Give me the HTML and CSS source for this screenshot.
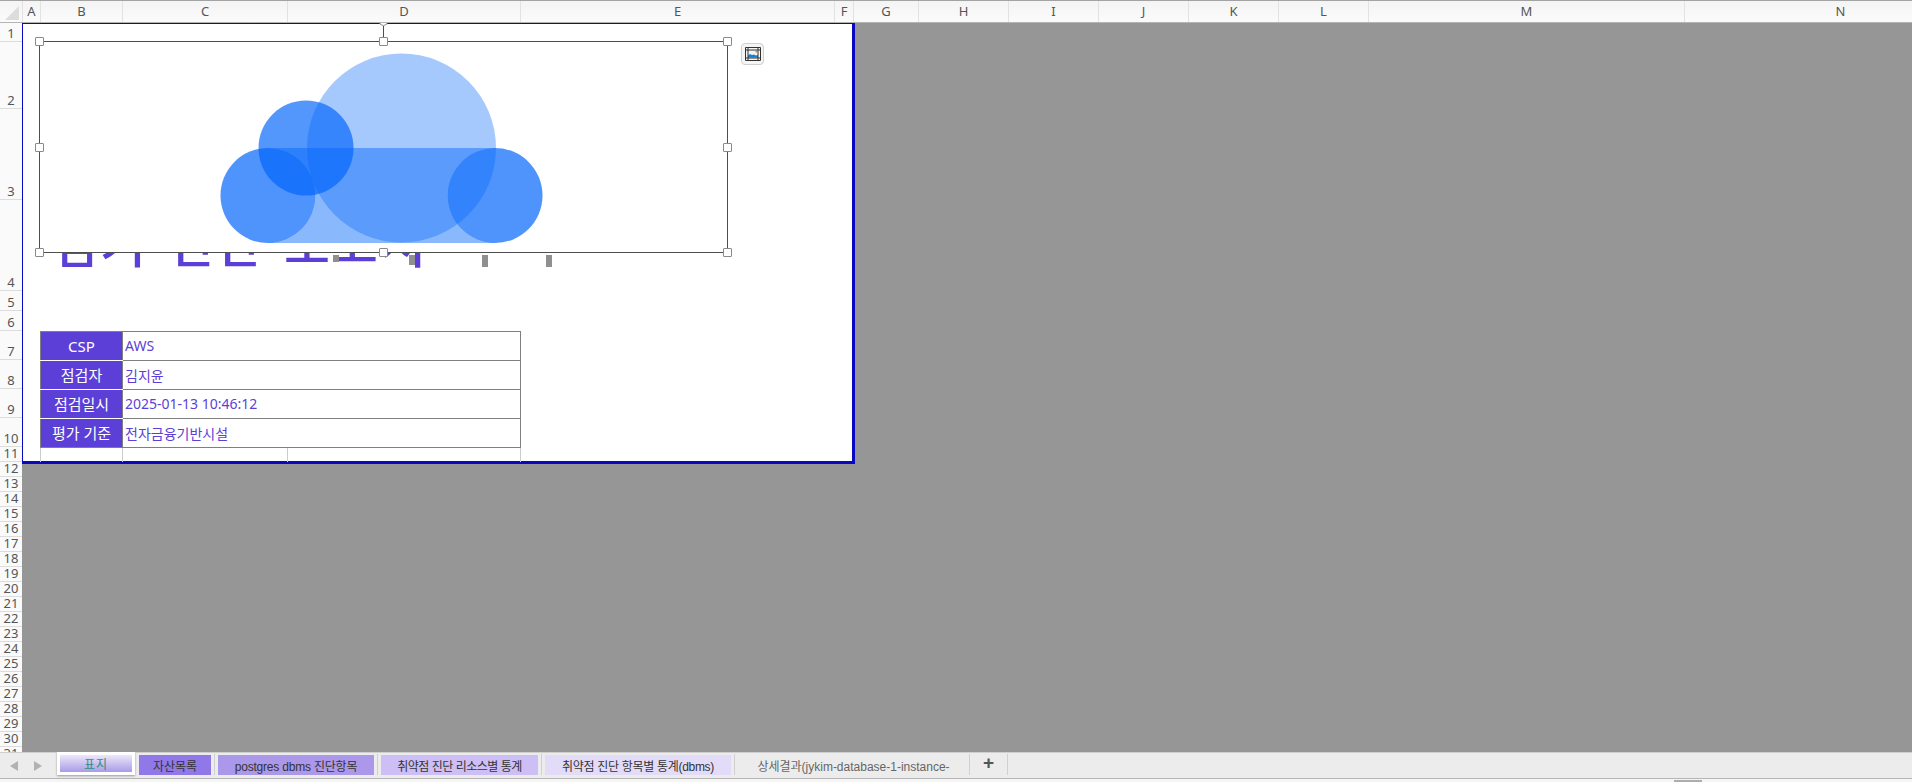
FILE: index.html
```html
<!DOCTYPE html>
<html lang="ko">
<head>
<meta charset="utf-8">
<title>표지</title>
<link rel="stylesheet" href="styles.css">
</head>
<body>
<div class="app">
  <header class="col-head">
    <div class="corner"><span class="corner-tri"></span></div>
    <div>A</div><div>B</div><div>C</div><div>D</div><div>E</div><div>F</div><div>G</div>
    <div>H</div><div>I</div><div>J</div><div>K</div><div>L</div><div>M</div><div>N</div>
  </header>
  <div class="main">
    <nav class="row-head">
      <div>1</div><div>2</div><div>3</div><div>4</div><div>5</div><div>6</div><div>7</div><div>8</div>
      <div>9</div><div>10</div><div>11</div><div>12</div><div>13</div><div>14</div><div>15</div><div>16</div>
      <div>17</div><div>18</div><div>19</div><div>20</div><div>21</div><div>22</div><div>23</div><div>24</div>
      <div>25</div><div>26</div><div>27</div><div>28</div><div>29</div><div>30</div><div>31</div>
    </nav>
    <section class="sheet">
      <div class="page">
        <div class="title-zone">
          <h1 class="title">점기 진단 보고서</h1>
          <span class="bar bar1"></span>
          <span class="bar bar2"></span>
          <span class="bar bar3"></span>
          <span class="bar bar4"></span>
        </div>
        <table class="info">
          <tr><th>CSP</th><td>AWS</td></tr>
          <tr><th>점검자</th><td>김지윤</td></tr>
          <tr><th>점검일시</th><td>2025-01-13 10:46:12</td></tr>
          <tr><th>평가 기준</th><td>전자금융기반시설</td></tr>
        </table>
        <div class="stub"><span class="s1"></span><span class="s2"></span><span class="s3"></span></div>

        <div class="picture">
          <svg class="cloud" viewBox="0 0 688 211" width="688" height="211" aria-hidden="true">
            <circle cx="361.500" cy="106" r="94.500" fill="#0064fa" fill-opacity=".35"/>
            <path d="M228 106H455A47.500 47.500 0 0 0 455 201H228A47.500 47.500 0 0 0 228 106Z" fill="#0064fa" fill-opacity=".46"/>
            <circle cx="228" cy="153.500" r="47.500" fill="#0064fa" fill-opacity=".69"/>
            <circle cx="266" cy="106" r="47.500" fill="#0064fa" fill-opacity=".67"/>
            <circle cx="455" cy="153.500" r="47.500" fill="#0064fa" fill-opacity=".69"/>
          </svg>
          <span class="rot-line"></span>
          <span class="rot-knob"></span>
          <span class="h h-tl"></span><span class="h h-tc"></span><span class="h h-tr"></span>
          <span class="h h-ml"></span><span class="h h-mr"></span>
          <span class="h h-bl"></span><span class="h h-bc"></span><span class="h h-br"></span>
        </div>
        <button class="layout-btn" aria-label="레이아웃 옵션">
          <svg viewBox="0 0 16 14" width="16" height="14" aria-hidden="true">
            <rect x="3" y="3" width="10" height="8" fill="#f4f4f4"/>
            <path d="M3 10.500V8.500l2-1.500 2 1 2-.5 2 1 2-.5v2.500z" fill="#1b7fd0"/>
            <rect x="10.500" y="4" width="1.500" height="1.500" fill="#e08a3c"/>
            <path d="M.5.5h15v13H.5zM3 .5v13M13 .5v13M.5 3h15M.5 11h15" fill="none" stroke="#333" stroke-width="1"/>
          </svg>
        </button>
      </div>
    </section>
  </div>
  <footer class="tabbar">
    <div class="nav-arrows"><span class="arr arr-l"></span><span class="arr arr-r"></span></div>
    <div class="tab tab-active"><span>표지</span></div>
    <div class="tab t2"><span>자산목록</span></div><i class="sep"></i>
    <div class="tab t3"><span>postgres dbms 진단항목</span></div><i class="sep"></i>
    <div class="tab t4"><span>취약점 진단 리소스별 통계</span></div><i class="sep"></i>
    <div class="tab t5"><span>취약점 진단 항목별 통계(dbms)</span></div><i class="sep"></i>
    <div class="tab t6"><span>상세결과(jykim-database-1-instance-</span></div><i class="sep"></i>
    <div class="plus">+</div><i class="sep"></i>
  </footer>
  <div class="scroll-strip"><span class="thumb"></span></div>
</div>
</body>
</html>
```
FILE: styles.css
```css
* { box-sizing: border-box; }
html, body { margin: 0; height: 100%; overflow: hidden; }
body { font-family: "Noto Sans", "Noto Sans CJK KR", sans-serif; background: #ececec; }

.app { width: 1912px; height: 782px; display: flex; flex-direction: column; overflow: hidden; }

/* Column header */
.col-head {
  flex: none; height: 23px;
  display: grid;
  grid-template-columns: 23px 18px 82px 165px 233px 314px 19px 65px 90px 90px 90px 90px 90px 316px 312px;
  background: linear-gradient(#f4f4f4, #fbfbfb);
  border-top: 1px solid #a3a3a3;
  border-bottom: 1px solid #b4b4b4;
  overflow: hidden;
  font-size: 13px; line-height: 21px; color: #555; text-align: center;
}
.col-head > div { border-right: 1px solid #e2e2e2; }
.corner { position: relative; }
.corner-tri {
  position: absolute; right: 3px; bottom: 2px;
  width: 0; height: 0;
  border-left: 14px solid transparent;
  border-bottom: 14px solid #dcdcdc;
}

.main { flex: none; height: 729px; display: flex; overflow: hidden; }

/* Row header */
.row-head {
  flex: none; width: 22px;
  display: grid;
  grid-template-rows: 19px 67px 91px 91px 20px 20px 29px 29px 29px 29px repeat(21, 15px);
  background: #fafafa;
  font-size: 13px; line-height: 15px; color: #555; text-align: center;
  overflow: hidden;
}
.row-head > div {
  border-bottom: 1px solid #dcdcdc;
  display: flex; align-items: flex-end; justify-content: center;
}

/* Sheet */
.sheet { flex: 1; background: #969696; overflow: hidden; }
.page {
  position: relative;
  width: 833px; height: 441px;
  background: #fff;
  border: solid #0808c0;
  border-width: 1px 3px 3px 1px;
  padding-left: 17px;
}

.title-zone { position: relative; height: 307px; overflow: hidden; }
.title {
  position: absolute; left: 12px; top: 187px;
  margin: 0; white-space: nowrap;
  font: 500 50px/60px "Noto Sans CJK KR", sans-serif;
  letter-spacing: 2px; word-spacing: 4px;
  color: #5b3fd6;
}
.bar { position: absolute; width: 6px; background: #8f8f8f; top: 231px; }
.bar1 { left: 293px; height: 7px; }
.bar2 { left: 369px; height: 10px; }
.bar3 { left: 442px; height: 12px; }
.bar4 { left: 506px; height: 12px; }

.info {
  border-collapse: collapse;
  width: 481px; table-layout: fixed;
  font-size: 14px;
}
.info tr { height: 29px; }
.info th {
  width: 82px; padding: 0 0 1px;
  background: #5b3fd6; color: #fff;
  font-weight: 400; font-size: 15px; text-align: center;
  border: 1px solid #7f7f7f;
  border-bottom-color: #fff;
}
.info tr:last-child th { border-bottom-color: #7f7f7f; }
.info td {
  padding: 0 0 1px 2px;
  color: #5b3fd6;
  border: 1px solid #7f7f7f;
}

.stub { display: flex; height: 14px; width: 481px; border-right: 1px solid #ccc; }
.stub span { display: block; border-left: 1px solid #ccc; }
.s1 { width: 82px; }
.s2 { width: 165px; }
.s3 { width: 233px; }

/* Selected picture */
.picture {
  position: absolute; left: 16px; top: 17px;
  width: 689px; height: 212px;
  background: #fff;
  border: 1px solid #4e4e4e;
}
.cloud { display: block; }
.h {
  position: absolute; width: 9px; height: 9px;
  background: #fff; border: 1px solid #8a8a8a; border-radius: 1px;
}
.h-tl { left: -5px; top: -5px; }
.h-tc { left: 339px; top: -5px; }
.h-tr { right: -5px; top: -5px; }
.h-ml { left: -5px; top: 101px; }
.h-mr { right: -5px; top: 101px; }
.h-bl { left: -5px; bottom: -5px; }
.h-bc { left: 339px; bottom: -5px; }
.h-br { right: -5px; bottom: -5px; }
.rot-line { position: absolute; left: 343px; top: -16px; width: 1px; height: 16px; background: #4e4e4e; }
.rot-knob {
  position: absolute; left: 339px; top: -25px;
  width: 9px; height: 9px; border-radius: 50%;
  background: #fff; border: 1px solid #8a8a8a;
}
.layout-btn {
  position: absolute; left: 718px; top: 19px;
  width: 23px; height: 22px; padding: 0;
  display: flex; align-items: center; justify-content: center;
  background: #f5f5f5; border: 1px solid #cfcfcf; border-radius: 4px;
}

/* Sheet tabs */
.tabbar {
  flex: none; height: 27px;
  display: flex; align-items: flex-start;
  background: #ececec;
  border-bottom: 1px solid #b5b5b5;
  border-top: 1px solid #cfcfcf;
  font: 12px/20px "Liberation Sans", "Noto Sans CJK KR", sans-serif;
  color: #333;
}
.nav-arrows { width: 57px; height: 100%; padding: 8px 0 0 10px; display: flex; gap: 16px; align-items: flex-start; }
.arr { width: 0; height: 0; border-top: 5px solid transparent; border-bottom: 5px solid transparent; }
.arr-l { border-right: 8px solid #b2b2b2; }
.arr-r { border-left: 8px solid #b2b2b2; }
.tab { flex: none; height: 20px; margin-top: 2px; text-align: center; overflow: hidden; white-space: nowrap; }
.tab span { display: block; line-height: 25px; height: 20px; overflow: hidden; }
.tab-active {
  width: 78px; height: 23px; margin: -1px 4px 0 0; padding: 3px;
  background: #fff; box-shadow: 0 1px 2px #999;
}
.tab .tab-label, .tab-active span {
  height: 17px; line-height: 21px; letter-spacing: 1px;
  background: linear-gradient(#ece7fb, #a99be6);
  color: #2f8f80;
}
.t2 { width: 72px; background: #9078e8; }
.t3 { width: 156px; background: #ab98ea; letter-spacing: -.2px; }
.t4 { width: 157px; background: #cdbff5; letter-spacing: -.5px; }
.t5 { width: 186px; background: #e3dcf8; letter-spacing: -.3px; }
.t6 { width: 231px; background: none; color: #666; }
.sep { flex: none; width: 1px; height: 21px; margin: 1px 3px 0; background: #d0d0d0; }
.t6 + .sep { margin: 1px 0 0; }
.plus { flex: none; width: 37px; text-align: center; font: 700 19px/20px "Liberation Sans", sans-serif; color: #555; }
.plus + .sep { margin: 1px 0 0; }

.scroll-strip { flex: none; height: 3px; background: #f5f5f5; position: relative; }
.thumb { position: absolute; left: 1674px; top: 1px; width: 28px; height: 2px; background: #adadad; }
```
